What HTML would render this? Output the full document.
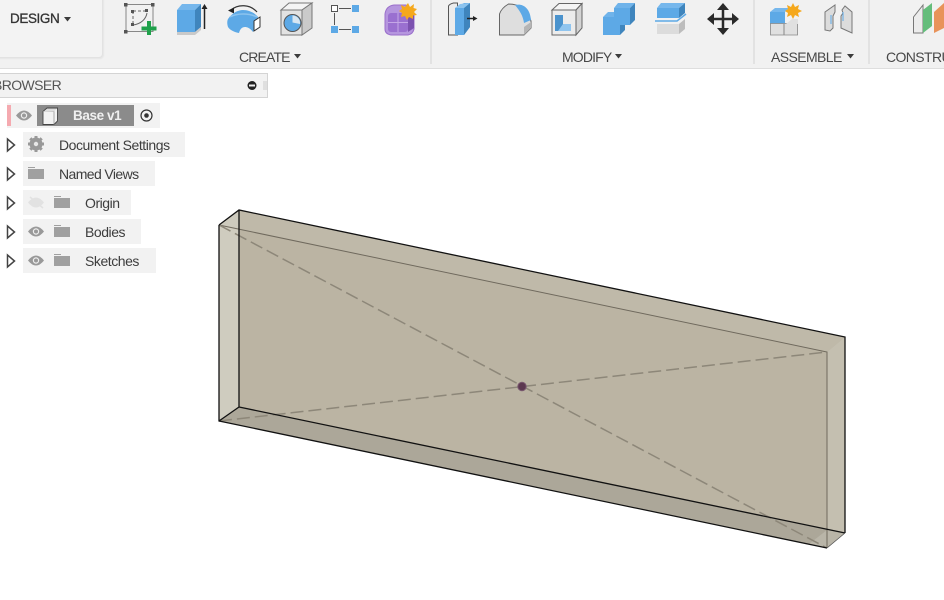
<!DOCTYPE html>
<html><head><meta charset="utf-8"><style>
html,body{margin:0;padding:0;background:#fff}
body{width:944px;height:600px;position:relative;overflow:hidden;font-family:"Liberation Sans",sans-serif;color:#3c3c3c}
.a{position:absolute;white-space:nowrap}
.l{font-size:14px;line-height:16px;color:#484848}
.row{position:absolute;background:#f2f2f2;height:25px}
.t{position:absolute;font-size:14px;line-height:16px;color:#3d3d3d;white-space:nowrap;letter-spacing:-.45px}
svg{position:absolute;left:0;top:0}
</style></head><body>
<div class="a" style="left:0;top:0;width:944px;height:68px;background:#f1f1f1;border-bottom:1px solid #dedede"></div>
<div class="a" style="left:-6px;top:-6px;width:107px;height:62px;background:#f3f3f3;border:1px solid #e2e2e2;border-radius:4px;box-shadow:1px 1px 1px #e6e6e6"></div>
<div class="a" style="left:10px;top:11px;font-size:13.500px;line-height:16px;color:#333;letter-spacing:-.4px;-webkit-text-stroke:.3px #333">DESIGN</div>
<div class="a" style="left:430px;top:0;width:2px;height:64px;background:#e2e2e2"></div>
<div class="a" style="left:753px;top:0;width:2px;height:64px;background:#e2e2e2"></div>
<div class="a" style="left:868px;top:0;width:2px;height:64px;background:#e2e2e2"></div>
<div class="a l" style="left:239px;top:49px;letter-spacing:-.85px">CREATE</div>
<div class="a l" style="left:562px;top:49px;letter-spacing:-.85px">MODIFY</div>
<div class="a l" style="left:771px;top:49px;letter-spacing:-.6px">ASSEMBLE</div>
<div class="a l" style="left:886px;top:49px;letter-spacing:-.6px">CONSTRUCT</div>

<div class="a" style="left:-2px;top:73px;width:268px;height:23px;background:#f2f2f2;border:1px solid #d4d4d4"></div>
<div class="a" style="left:-7px;top:77px;font-size:14px;line-height:16px;color:#555;letter-spacing:-.6px">BROWSER</div>

<div class="row" style="left:7px;top:103px;width:153px"></div>
<div class="a" style="left:7px;top:105px;width:4px;height:21px;background:#f5aab0"></div>
<div class="a" style="left:37px;top:105px;width:97px;height:21px;background:#8b8b8b"></div>
<div class="a" style="left:73px;top:108px;font-size:13.500px;line-height:16px;font-weight:bold;color:#f0f0f0;letter-spacing:-.4px">Base v1</div>
<div class="row" style="left:23px;top:132px;width:162px"></div>
<div class="row" style="left:23px;top:161px;width:132px"></div>
<div class="row" style="left:23px;top:190px;width:108px"></div>
<div class="row" style="left:23px;top:219px;width:118px"></div>
<div class="row" style="left:23px;top:248px;width:133px"></div>
<div class="t" style="left:59px;top:137px">Document Settings</div>
<div class="t" style="left:59px;top:166px;letter-spacing:-.6px">Named Views</div>
<div class="t" style="left:85px;top:195px">Origin</div>
<div class="t" style="left:85px;top:224px">Bodies</div>
<div class="t" style="left:85px;top:253px">Sketches</div>

<svg width="944" height="600" viewBox="0 0 944 600">
<!-- body -->
<polygon points="239,210 845,337 845,533 827,548 219,421 219,225" fill="#bbb4a3"/>
<polygon points="219,225 239,210 239,407 219,421" fill="#cfccbf"/>
<polygon points="219,421 239,407 845,533 827,548" fill="#aca799"/>
<polygon points="827,352 845,337 845,533 827,548" fill="#c4bfb0"/>
<polygon points="827,530 845,533 827,548 809,544" fill="#b9b5a8"/>
<polygon points="219,225 239,210 845,337 827,352" fill="#bfb9a9"/>
<polygon points="219,225 239,210 239,229" fill="#cdcabd"/>
<g fill="none">
<path d="M219 225L827 352V548" stroke="#6f695d" stroke-width="1"/>
<path d="M219 225L827 548M219 421L827 352" stroke="#8d8779" stroke-width="1.500" stroke-dasharray="13 5"/>
<path d="M219 225L239 210L845 337V533M827 548L219 421V225M239 210V407L845 533M239 407L219 421" stroke="#111" stroke-width="1.300"/>
<path d="M827 548L845 533" stroke="#555" stroke-width=".8"/>
</g>
<circle cx="522" cy="386.500" r="4.200" fill="#5c3850" stroke="#7a5a70" stroke-width="1"/>

<!-- dropdown arrows -->
<g fill="#3c3c3c">
<path d="M64 17h7l-3.500 4.500z"/><path d="M294 54h7l-3.500 4.500z"/><path d="M615 54h7l-3.500 4.500z"/><path d="M847 54h7l-3.500 4.500z"/>
</g>

<!-- Sketch -->
<rect x="126" y="4.500" width="27" height="27" fill="none" stroke="#888" stroke-width="1"/>
<path d="M133 11h13M133 11v14" fill="none" stroke="#666" stroke-dasharray="3 2"/>
<path d="M133 25c8-1 13-6 14-12" fill="none" stroke="#666"/>
<g fill="#555"><rect x="124" y="3" width="3.500" height="3.500"/><rect x="151" y="3" width="3.500" height="3.500"/><rect x="124" y="30" width="3.500" height="3.500"/><rect x="131" y="10" width="3" height="3"/><rect x="145" y="9" width="3" height="3"/><rect x="131" y="23" width="3" height="3"/></g>
<path d="M147 21h4v5.500h5.500v4H151V35h-4v-4.500h-5.500v-4H147z" fill="#1fa14b"/>

<!-- Extrude -->
<polygon points="177,10 195,10 195,32 177,32" fill="#5da9e6"/>
<polygon points="177,10 182,4 201,4 195,10" fill="#76b7ec"/>
<polygon points="195,10 201,4 201,27 195,32" fill="#3f85bd"/>
<polygon points="177,32 195,32 201,27 201,30 195,35 177,35" fill="#c9c9c9"/>
<path d="M204.500 29V7" stroke="#222" stroke-width="1.500"/><path d="M201.500 9l3-5 3 5z" fill="#222"/>

<!-- Revolve -->
<path d="M231 10c7-6 19-6 26 2" fill="none" stroke="#333" stroke-width="1.200"/><path d="M228 10.500l6-3v6z" fill="#222"/>
<path d="M228 19C232 13 238 10 243 10C249 10 255 13 258 17L253 32C250 28 247 27 245 27C242 27 240 29 239 33C234 32 230 30 228 27C227 24 227 21 228 19Z" fill="#5da9e6"/>
<path d="M230 17c7-4 19-4 27 0" fill="none" stroke="#8cc3ee" stroke-width="1.500"/>
<polygon points="254,21 260,17 260,27 254,31" fill="#fff" stroke="#333"/>

<!-- Hole -->
<polygon points="281,10 302,10 302,35 281,35" fill="#e2e2e2" stroke="#777"/>
<polygon points="281,10 289,3 312,3 302,10" fill="#f4f4f4" stroke="#777"/>
<polygon points="302,10 312,3 312,28 302,35" fill="#cacaca" stroke="#777"/>
<circle cx="292.500" cy="23" r="8.500" fill="#5da9e6" stroke="#555"/>
<path d="M292.500 15.500a7.500 7.500 0 0 1 7.500 8.500l-7.500-1.500z" fill="#d7e6f2"/>

<!-- Pattern -->
<rect x="331.500" y="5.500" width="6" height="6" fill="#fff" stroke="#555"/>
<rect x="352" y="5" width="7" height="7" fill="#5da9e6"/>
<rect x="331" y="26" width="7" height="7" fill="#5da9e6"/>
<rect x="352" y="26" width="7" height="7" fill="#5da9e6"/>
<path d="M339 8.500h12M334.500 13v12M339 29.500h12" stroke="#555"/>

<!-- Create form -->
<path d="M385 14q1-8 9-9h12l8 8v16q-1 5-6 6h-17q-6-1-6-6z" fill="#b596de" stroke="#9a6fcb"/>
<rect x="388" y="13" width="20" height="19" rx="3" fill="#9a70d0"/>
<path d="M398 13v19M388 22.500h20" stroke="#c4a7e6"/>
<path d="M408 12v20l6-4V14z" fill="#7c52b0"/>
<polygon points="408,3 410,7 414,4 413.500,8 417,9 414,12 417,15 413,15.500 413,19 409,17 407,20 405,16 401,17 402,13 399,11 402,9 401,5 405,7" fill="#f5a81c"/>

<!-- Press pull -->
<path d="M448.500 35V6q1-2 5-3h4v32z" fill="#ececec" stroke="#555"/>
<polygon points="455,8 464,3 470,3 470,27 464,35 455,35" fill="#5da9e6"/>
<polygon points="464,8 470,3 470,27 464,35" fill="#3f85bd"/>
<polygon points="455,8 460,4 470,3 464,8" fill="#8cc3ee"/>
<path d="M467 18.500h7" stroke="#222" stroke-width="1.500"/><path d="M473 16l4.500 2.500-4.500 2.500z" fill="#222"/>

<!-- Fillet -->
<path d="M499.500 35V14q2-6 9-10 17 0 22.500 17v7l-7 7z" fill="#dedede" stroke="#666"/>
<path d="M515 5c8-2 15 3 16 15l-7 3c-1-7-4-12-9-18z" fill="#5da9e6"/>
<polygon points="524,27 531,22 531,28 524,35" fill="#b5b5b5"/>

<!-- Chamfer -->
<polygon points="552,10 576,10 576,35 552,35" fill="#ececec" stroke="#666"/>
<polygon points="552,10 559,3.500 582,3.500 576,10" fill="#f4f4f4" stroke="#666"/>
<polygon points="576,10 582,3.500 582,28 576,35" fill="#d4d4d4" stroke="#666"/>
<polygon points="555,15 563,15 563,24 571,24 571,31 555,31" fill="#4b93cd"/>
<polygon points="558,31 563,24 571,24 571,31" fill="#90c5ef"/>

<!-- Combine -->
<polygon points="603,17 620,17 620,35 603,35" fill="#5da9e6"/>
<polygon points="603,17 608,12 622,12 620,17" fill="#6fb3ea"/>
<polygon points="620,17 625,12 625,30 620,35" fill="#3f85bd"/>
<polygon points="614,8 630,8 630,25 614,25" fill="#5da9e6"/>
<polygon points="614,8 618,3 635,3 630,8" fill="#6fb3ea"/>
<polygon points="630,8 635,3 635,20 630,25" fill="#3f85bd"/>

<!-- Split -->
<polygon points="657,8 679,8 679,18 657,18" fill="#5da9e6"/>
<polygon points="657,8 661,3 685,3 679,8" fill="#76b7ec"/>
<polygon points="679,8 685,3 685,13 679,18" fill="#3f85bd"/>
<path d="M655 21h22l9-7" fill="none" stroke="#5da9e6" stroke-width="1.500"/>
<polygon points="657,24 679,24 679,34 657,34" fill="#dcdcdc"/>
<polygon points="679,24 685,19 685,29 679,34" fill="#bdbdbd"/>

<!-- Move -->
<path d="M723 7v24M711 19h24" stroke="#2a2a2a" stroke-width="2.500"/>
<path d="M723 3l6 7h-12zM723 35l6-7h-12zM707 19l7-6v12zM739 19l-7-6v12z" fill="#2a2a2a"/>

<!-- Assemble -->
<polygon points="770,12 785,12 785,24 770,24" fill="#5da9e6"/>
<polygon points="770,12 775,8 789,8 785,12" fill="#76b7ec"/>
<polygon points="770.500,23.500 797.500,23.500 797.500,35 770.500,35" fill="#e0e0e0" stroke="#888" stroke-width=".8"/>
<path d="M784 24v11" stroke="#888"/>
<polygon points="786,24 792,19 798,19 798,24" fill="#e0e0e0"/>
<polygon points="793,3 795,7 799,5 798,9 802,11 798,13 799,17 795,15 793,19 791,15 787,17 788,13 785,11 788,9 787,5 791,7" fill="#f5a81c"/>

<!-- Joint -->
<path d="M825 30V12l10-7v7l-2 4v12l-3 3z" fill="#dcdcdc" stroke="#777"/>
<path d="M852 33V12l-7-6-3 4 1 3-2 3v12z" fill="#dcdcdc" stroke="#777"/>
<path d="M831 15v9M843 12v9" stroke="#5da9e6"/>

<!-- Construct -->
<polygon points="913.500,17 923,5 923,33 913.500,33" fill="#ececec" stroke="#777"/>
<polygon points="923,10 932,3 932,26 923,33" fill="#64bd7b"/>
<polygon points="934,12 944,3 944,28 934,33" fill="#e8935a"/>

<!-- Browser controls -->
<circle cx="252" cy="85.500" r="4.500" fill="#222"/><rect x="249" y="84.500" width="6" height="2" fill="#eee"/>
<path d="M264 81v9M266 81v9" stroke="#ccc"/>

<!-- Tree arrows -->
<g fill="#fff" stroke="#444" stroke-width="1.500">
<path d="M7.500 139V151l7-6z"/><path d="M7.500 168V180l7-6z"/><path d="M7.500 197V209l7-6z"/><path d="M7.500 226V238l7-6z"/><path d="M7.500 255V267l7-6z"/>
</g>

<!-- Eyes -->
<g>
<path d="M16 115.500q8-10 16 0q-8 10-16 0z" fill="#999"/><circle cx="24" cy="115.500" r="3.200" fill="#eee"/><circle cx="24" cy="115.500" r="2" fill="#999"/>
<path d="M28 231.500q8-10 16 0q-8 10-16 0z" fill="#999"/><circle cx="36" cy="231.500" r="3.200" fill="#eee"/><circle cx="36" cy="231.500" r="2" fill="#999"/>
<path d="M28 260.500q8-10 16 0q-8 10-16 0z" fill="#999"/><circle cx="36" cy="260.500" r="3.200" fill="#eee"/><circle cx="36" cy="260.500" r="2" fill="#999"/>
<path d="M28 202.500q8-10 16 0q-8 10-16 0z" fill="#e2e2e2"/><path d="M30 197l13 11" stroke="#e2e2e2" stroke-width="1.500"/>
</g>

<!-- Base box icon -->
<path d="M43 111.500l4-3.500h10.500v13l-3.500 3.500H43z" fill="#f2f2f2" stroke="#444" stroke-width=".9"/>
<path d="M43 111.500h11v13" fill="none" stroke="#999" stroke-width=".8"/>
<path d="M43.500 112l4-3.500h9.500l-3 3z" fill="#ddd"/>

<!-- Radio -->
<circle cx="146.500" cy="115.500" r="5.500" fill="none" stroke="#333" stroke-width="1.200"/><circle cx="146.500" cy="115.500" r="2.300" fill="#333"/>

<!-- Gear -->
<circle cx="36" cy="144" r="6.500" fill="#999"/>
<path d="M36 136v16M28 144h16M30.300 138.300l11.400 11.400M41.700 138.300l-11.400 11.400" stroke="#999" stroke-width="3"/>
<circle cx="36" cy="144" r="2.200" fill="#e8e8e8"/>

<!-- Folders -->
<g fill="#a0a0a0">
<path d="M28 169h16v10h-16z"/><path d="M28 167h7v1h-7z"/>
<path d="M54 198h16v10h-16z"/><path d="M54 196h7v1h-7z"/>
<path d="M54 227h16v10h-16z"/><path d="M54 225h7v1h-7z"/>
<path d="M54 256h16v10h-16z"/><path d="M54 254h7v1h-7z"/>
</g>
</svg>
</body></html>
